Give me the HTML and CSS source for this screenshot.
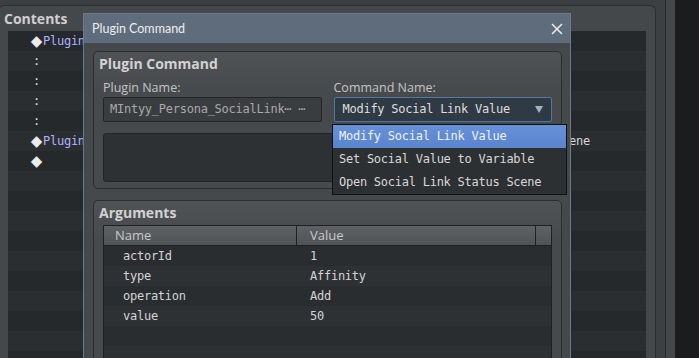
FILE: index.html
```html
<!DOCTYPE html>
<html lang="en">
<head>
    <meta charset="UTF-8">
    <title>Plugin Command</title>
    <link rel="stylesheet" href="styles.css">
</head>
<body>
    <!-- event editor behind the dialog -->
    <div class="editor">
        <div class="contents">
            <div class="contents-title">Contents</div>
            <div class="list">
                <div class="line"><span class="diamond">◆</span><span class="cmd">Plugin</span></div>
                <div class="line"><span class="mark">:</span></div>
                <div class="line"><span class="mark">:</span></div>
                <div class="line"><span class="mark">:</span></div>
                <div class="line"><span class="mark">:</span></div>
                <div class="line"><span class="diamond">◆</span><span class="cmd">Plugin</span><span class="rest">Open Social Link Status Scene</span></div>
                <div class="line"><span class="diamond">◆</span></div>
                <div class="line"></div>
                <div class="line"></div>
                <div class="line"></div>
                <div class="line"></div>
                <div class="line"></div>
                <div class="line"></div>
                <div class="line"></div>
                <div class="line"></div>
                <div class="line"></div>
                <div class="line"></div>
            </div>
        </div>
        <div class="strip"></div>
        <div class="strip-2"></div>
        <div class="void"></div>
    </div>

    <div class="dialog">
        <div class="titlebar">
            <span>Plugin Command</span>
            <svg class="close" width="12" height="12" viewBox="0 0 12 12">
                <path d="M1 1 L11 11 M11 1 L1 11" stroke="#ececec" stroke-width="1.5" fill="none"/>
            </svg>
        </div>
        <div class="dialog-body">
            <div class="group">
                <div class="group-label">Plugin Command</div>
                <div class="fields">
                    <div class="field">
                        <div class="field-label">Plugin Name:</div>
                        <div class="input">MIntyy_Persona_SocialLink⋯ ⋯</div>
                    </div>
                    <div class="field">
                        <div class="field-label">Command Name:</div>
                        <div class="combo">
                            <span>Modify Social Link Value</span>
                            <svg width="8" height="7" viewBox="0 0 8 7"><polygon points="0,0 8,0 4,7" fill="#a3b2c2"/></svg>
                        </div>
                    </div>
                </div>
                <div class="desc"></div>
            </div>

            <div class="group args">
                <div class="group-label">Arguments</div>
                <div class="grid-table">
                    <div class="head">
                        <div>Name</div>
                        <div>Value</div>
                        <div></div>
                    </div>
                    <div class="row"><div>actorId</div><div>1</div></div>
                    <div class="row"><div>type</div><div>Affinity</div></div>
                    <div class="row"><div>operation</div><div>Add</div></div>
                    <div class="row"><div>value</div><div>50</div></div>
                    <div class="row"><div></div><div></div></div>
                    <div class="row"><div></div><div></div></div>
                </div>
            </div>
        </div>

        <!-- open combo list -->
        <ul class="popup">
            <li class="selected">Modify Social Link Value</li>
            <li>Set Social Value to Variable</li>
            <li>Open Social Link Status Scene</li>
        </ul>
    </div>
</body>
</html>
```

FILE: styles.css
```css
* {
    box-sizing: border-box;
    margin: 0;
    padding: 0;
}

body {
    width: 699px;
    height: 358px;
    overflow: hidden;
    position: relative;
    background: #3c3f41;
    font-family: "Open Sans", "Noto Sans", sans-serif;
    font-size: 12.5px;
    color: #c8c8c8;
}

.editor {
    display: flex;
    height: 358px;
}

.contents {
    width: 658px;
    margin-left: -2px;
    margin-top: 5px;
    padding: 0 9px;
    background: #45484b;
    border: 1px solid #2b2d2f;
    border-bottom: none;
    border-radius: 6px 6px 0 0;
}

.contents-title {
    height: 25px;
    line-height: 25px;
    margin-left: -4px;
    font-size: 14px;
    font-weight: 700;
    color: #cfcfcf;
}

.list {
    font-family: "DejaVu Sans Mono", monospace;
    font-size: 12px;
    letter-spacing: -0.25px;
    color: #d6d6d6;
}

.line {
    display: flex;
    height: 20px;
    line-height: 20px;
    padding-left: 22px;
    white-space: nowrap;
    overflow: hidden;
    background: #25292c;
}

.line:nth-child(even) {
    background: #2b2e31;
}

.mark {
    width: 13px;
    text-align: center;
    color: #e0e0e0;
}

.diamond {
    width: 13px;
    text-align: center;
    font-family: "DejaVu Sans", sans-serif;
    font-size: 15px;
    color: #ececec;
}

.cmd {
    color: #b0b2ff;
}

/* tail of the long line, the rest sits under the dialog */
.rest {
    margin-left: auto;
    margin-right: 56px;
}

.strip {
    width: 10px;
    background: #3d4042;
    border-right: 1px solid #2a2c2e;
}

.strip-2 {
    width: 9px;
    background: #45484a;
}

.void {
    flex: 1;
    background: #1b1c1d;
}

/* dialog */

.dialog {
    position: absolute;
    left: 83px;
    top: 13px;
    width: 488px;
    height: 360px;
    background: #46494c;
    border: 1px solid #6d7a8a;
}

.titlebar {
    height: 29px;
    padding: 0 7px 0 8px;
    display: flex;
    align-items: center;
    justify-content: space-between;
    background: #5f6c7c;
    font-family: Lato, sans-serif;
    font-size: 12.5px;
    color: #eeeeee;
}

.dialog-body {
    padding: 8px 8px 0 9px;
}

.group {
    border: 1px solid #2b2d2f;
    border-radius: 5px;
    background: linear-gradient(#505356, #474a4d 40px);
    padding: 0 9px 6px 9px;
}

.group-label {
    height: 24px;
    line-height: 24px;
    margin-left: -4px;
    font-size: 14px;
    font-weight: 700;
    color: #d2d2d2;
}

.fields {
    display: flex;
    gap: 12px;
}

.field {
    flex: 1;
}

.field-label {
    height: 21px;
    padding-top: 2px;
    line-height: 19px;
    color: #c4c4c4;
}

.input,
.combo {
    height: 25px;
    line-height: 23px;
    border-radius: 2px;
    font-family: "DejaVu Sans Mono", monospace;
    font-size: 12px;
    letter-spacing: -0.25px;
    white-space: nowrap;
}

.input {
    padding-left: 6px;
    background: #3a3d40;
    border: 1px solid #232527;
    color: #a9a9a9;
}

.combo {
    display: flex;
    align-items: center;
    justify-content: space-between;
    padding: 0 8px 0 8px;
    background: #303a45;
    border: 1px solid #4f79a4;
    color: #dedede;
}

.desc {
    height: 49px;
    margin-top: 11px;
    background: #2e3134;
    border: 1px solid #232527;
    border-radius: 3px;
}

.args {
    margin-top: 11px;
    height: 200px;
}

.grid-table {
    border: 1px solid #1e2022;
    font-size: 13px;
}

.head {
    display: grid;
    grid-template-columns: 193px 239px 1fr;
    height: 20px;
    line-height: 19px;
    background: linear-gradient(#5d6164, #505457);
    border-bottom: 1px solid #1e2022;
    color: #c9c9c9;
}

.head div {
    border-right: 1px solid #1e2022;
    padding-left: 11px;
}

.head div:nth-child(2) {
    padding-left: 13px;
}

.head div:last-child {
    border-right: none;
}

.row {
    display: grid;
    grid-template-columns: 193px 1fr;
    height: 20px;
    line-height: 20px;
    background: #2a2d30;
    font-family: "DejaVu Sans Mono", monospace;
    font-size: 12px;
    letter-spacing: -0.25px;
    color: #d4d4d4;
}

.row:nth-child(odd) {
    background: #2e3134;
}

.row div:first-child {
    padding-left: 19px;
}

.row div:last-child {
    padding-left: 13px;
}

.popup {
    position: absolute;
    left: 248px;
    top: 110px;
    width: 235px;
    list-style: none;
    background: #2d3033;
    border: 1px solid #101112;
    font-family: "DejaVu Sans Mono", monospace;
    font-size: 12px;
    letter-spacing: -0.25px;
    color: #d8d8d8;
}

.popup li {
    height: 23px;
    line-height: 23px;
    padding-left: 6px;
}

.popup li.selected {
    background: linear-gradient(#6691d8, #5a84cd);
    color: #eef2fa;
}
```
